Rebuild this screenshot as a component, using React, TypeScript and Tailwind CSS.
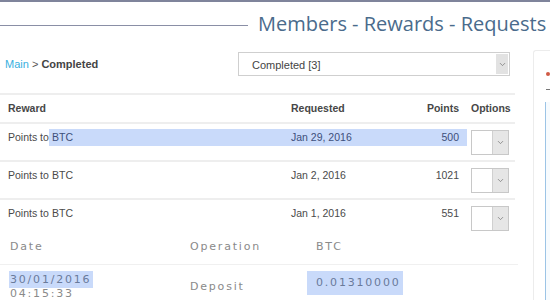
import { ChevronDown } from "lucide-react";

const rows = [
  { reward: "Points to BTC", date: "Jan 29, 2016", points: "500", selected: true },
  { reward: "Points to BTC", date: "Jan 2, 2016", points: "1021", selected: false },
  { reward: "Points to BTC", date: "Jan 1, 2016", points: "551", selected: false },
];

function MiniSelect() {
  return (
    <div className="flex h-[25px] w-[38px] border border-[#c8c8c8] bg-white">
      <div className="flex-1" />
      <div className="flex w-[16px] items-center justify-center border-l border-[#d0d0d0] bg-[#e6e6e6]">
        <ChevronDown className="h-[9px] w-[9px] text-[#777]" strokeWidth={2} />
      </div>
    </div>
  );
}

export default function App() {
  return (
    <div className="h-[300px] w-[550px] overflow-hidden bg-white font-['Liberation_Sans',Arial,sans-serif] text-[11px] text-[#4a4a4a]">
      <div className="h-[2px] bg-[#7f849b]" />
      <div className="flex h-[40px]">
        <div className="h-[24px] w-[248px] shrink-0 border-b-[1.5px] border-[#8a8fa6]" />
        <div className="ml-[10px] pt-[9px] font-['Open_Sans',sans-serif] text-[20px] leading-[26px] whitespace-nowrap text-[#4a6b8c]">
          Members - Rewards - Requests
        </div>
      </div>

      <div className="flex">
        <div className="w-[518px] shrink-0">
          <div className="flex h-[51px] items-start pt-[10px]">
            <div className="pt-[4px] pl-[5px]">
              <span className="text-[#39b0e0]">Main</span>
              <span className="text-[#555]"> &gt; </span>
              <span className="font-bold text-[#444]">Completed</span>
            </div>
            <div className="ml-auto mr-[8px] flex h-[24px] w-[272px] border border-[#cfcfcf] bg-white">
              <div className="flex-1 pl-[13px] pt-[4px] text-[#444]">Completed [3]</div>
              <div className="my-[1px] mr-[1px] flex w-[12px] items-center justify-center bg-[#e2e2e2]">
                <ChevronDown className="h-[9px] w-[9px] text-[#777]" strokeWidth={2} />
              </div>
            </div>
          </div>

          <div className="mr-[3px] border-t-2 border-[#eeeeee]">
            <div className="flex h-[27px] items-center text-[10.5px] font-bold text-[#474747]">
              <div className="w-[283px] shrink-0 pl-[8px]">Reward</div>
              <div className="w-[120px] shrink-0 pl-[8px]">Requested</div>
              <div className="w-[56px] shrink-0 text-right">Points</div>
              <div className="pl-[12px]">Options</div>
            </div>
            {rows.map((r, i) => (
              <div key={i} className="flex h-[38px] items-start border-t-2 border-[#eeeeee] text-[10.5px]">
                <div className="mt-[5px] flex h-[17px] shrink-0 items-center">
                  <div className="w-[49px] shrink-0 pl-[8px] whitespace-nowrap">Points to</div>
                  <div className={`flex h-[17px] w-[418px] shrink-0 items-center ${r.selected ? "bg-[#c9dafa] text-[#3d4f7a]" : ""}`}>
                    <div className="w-[242px] shrink-0 pl-[3px]">BTC</div>
                    <div className="w-[120px] shrink-0">{r.date}</div>
                    <div className="w-[48px] shrink-0 text-right">{r.points}</div>
                  </div>
                </div>
                <div className="mt-[6px] ml-[4px] shrink-0">
                  <MiniSelect />
                </div>
              </div>
            ))}
          </div>

          <div className="-mt-[1px] font-['DejaVu_Sans',Verdana,sans-serif] text-[11px] tracking-[1.8px] text-[#8a8a8a]">
            <div className="flex h-[30px] items-start border-b border-[#f0f0f0] pt-[4px]">
              <div className="w-[180px] pl-[10px]">Date</div>
              <div className="w-[126px] pl-[10px]">Operation</div>
              <div className="pl-[10px]">BTC</div>
            </div>
            <div className="flex h-[34px] items-start pt-[6px]">
              <div className="w-[180px] pl-[9px] leading-[12px]">
                <div className="flex h-[17px] w-[84px] items-center bg-[#c9dafa] pl-[1px] text-[#6a7a9a]">30/01/2016</div>
                <div className="pl-[1px]">04:15:33</div>
              </div>
              <div className="w-[127px] pt-[8px] pl-[10px]">Deposit</div>
              <div className="flex h-[24px] w-[96px] items-center bg-[#c9dafa] pl-[9px] text-[#6a7a9a]">0.01310000</div>
            </div>
          </div>
        </div>

        <div className="ml-[15px] mt-[8px] h-[260px] flex-1 rounded-tl-[3px] border border-r-0 border-[#ececec]">
          <div className="ml-[12px] mt-[21px] h-[4px] w-[4px] rounded-full bg-[#d05a45]" />
          <div className="ml-[12px] mt-[13px] h-[1px] w-[6px] bg-[#777]" />
          <div className="ml-[11px] mt-[12px] h-[200px] border-l border-[#9cc4e6] bg-[#f7fbfe]" />
        </div>
      </div>
    </div>
  );
}
